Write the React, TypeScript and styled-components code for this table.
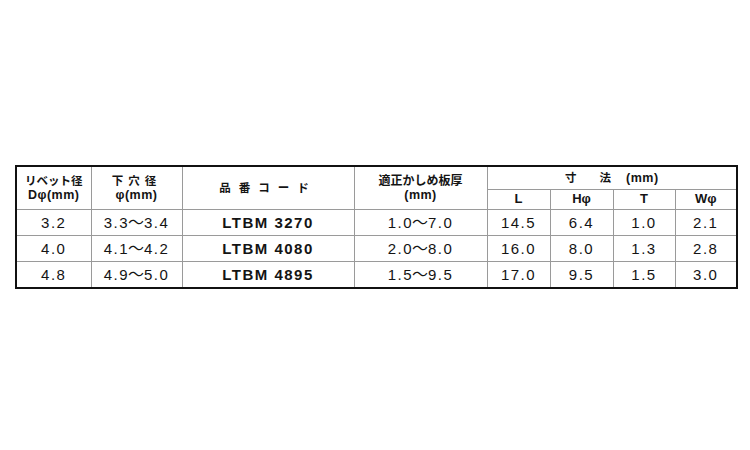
import React from 'react'
import styled, {createGlobalStyle} from 'styled-components'

const GlobalStyle = createGlobalStyle`
  html, body {
    margin: 0;
    padding: 0;
    background: #ffffff;
  }
  body {
    font-family: "Liberation Sans", "Noto Sans CJK JP", sans-serif;
    color: #141414;
  }
`

const Page = styled.div`
  width: 750px;
  height: 450px;
  box-sizing: border-box;
  padding: 165px 0 0 15px;
  background: #fff;
`

const SpecTable = styled.table`
  width: 721px;
  border-collapse: collapse;
  table-layout: fixed;
  border: 2px solid #111;
`

const HeadCell = styled.th`
  padding: 0;
  border: 1px solid #9a9a9a;
  font-family: "Liberation Sans", "Noto Sans CJK JP", sans-serif;
  font-weight: 700;
  font-size: 13px;
  line-height: 14px;
  text-align: center;
  vertical-align: middle;
  color: #141414;
`

// japanese label text sits a bit smaller than the latin units
const Jp = styled.span<{$spread?: number; $size?: number}>`
  font-family: "Noto Sans CJK JP", sans-serif;
  font-size: ${p => p.$size ?? 11.5}px;
  letter-spacing: ${p => p.$spread ?? 0}px;
`

const Unit = styled.span`
  font-size: 12.5px;
  letter-spacing: 0.5px;
`

const Cell = styled.td<{$bold?: boolean}>`
  padding: 0;
  height: 25px;
  border: 1px solid #9a9a9a;
  font-family: "Liberation Sans", "Noto Sans CJK JP", sans-serif;
  font-size: 15px;
  font-weight: ${p => (p.$bold ? 700 : 400)};
  letter-spacing: 1.5px;
  text-align: center;
  vertical-align: middle;
  color: #141414;
`

const Wave = styled.span`
  display: inline-flex;
  justify-content: center;
  width: 14px;
  margin-right: 1px;
  font-family: "Noto Sans CJK JP", sans-serif;
  font-size: 16px;
  line-height: 15px;
  letter-spacing: 0;
  white-space: nowrap;
`

const TopRow = styled.tr`
  height: 23px;
`

const SubRow = styled.tr`
  height: 20px;
`

type Rivet = {
  d: string
  hole: [string, string]
  code: string
  grip: [string, string]
  l: string
  h: string
  t: string
  w: string
}

const rivets: Rivet[] = [
  {d: '3.2', hole: ['3.3', '3.4'], code: 'LTBM 3270', grip: ['1.0', '7.0'], l: '14.5', h: '6.4', t: '1.0', w: '2.1'},
  {d: '4.0', hole: ['4.1', '4.2'], code: 'LTBM 4080', grip: ['2.0', '8.0'], l: '16.0', h: '8.0', t: '1.3', w: '2.8'},
  {d: '4.8', hole: ['4.9', '5.0'], code: 'LTBM 4895', grip: ['1.5', '9.5'], l: '17.0', h: '9.5', t: '1.5', w: '3.0'},
]

const widths = [75, 91, 172, 133, 63, 63, 62, 62]

const Range = ({pair}: {pair: [string, string]}) => (
  <>
    {pair[0]}
    <Wave>〜</Wave>
    {pair[1]}
  </>
)

export default function App() {
  return (
    <>
      <GlobalStyle />
      <Page>
        <SpecTable>
          <colgroup>
            {widths.map((w, i) => (
              <col key={i} style={{width: w}} />
            ))}
          </colgroup>
          <thead>
            <TopRow>
              <HeadCell rowSpan={2}>
                <Jp>リベット径</Jp>
                <br />
                <Unit>Dφ(mm)</Unit>
              </HeadCell>
              <HeadCell rowSpan={2}>
                <Jp $spread={5}>下穴径</Jp>
                <br />
                <Unit>φ(mm)</Unit>
              </HeadCell>
              <HeadCell rowSpan={2}>
                <Jp $spread={8}>品番コード</Jp>
              </HeadCell>
              <HeadCell rowSpan={2}>
                <Jp $size={12}>適正かしめ板厚</Jp>
                <br />
                <Unit>(mm)</Unit>
              </HeadCell>
              <HeadCell colSpan={4}>
                <Jp>寸　　法　</Jp> <Unit>(mm)</Unit>
              </HeadCell>
            </TopRow>
            <SubRow>
              <HeadCell>L</HeadCell>
              <HeadCell>Hφ</HeadCell>
              <HeadCell>T</HeadCell>
              <HeadCell>Wφ</HeadCell>
            </SubRow>
          </thead>
          <tbody>
            {rivets.map(r => (
              <tr key={r.code}>
                <Cell>{r.d}</Cell>
                <Cell>
                  <Range pair={r.hole} />
                </Cell>
                <Cell $bold>{r.code}</Cell>
                <Cell>
                  <Range pair={r.grip} />
                </Cell>
                <Cell>{r.l}</Cell>
                <Cell>{r.h}</Cell>
                <Cell>{r.t}</Cell>
                <Cell>{r.w}</Cell>
              </tr>
            ))}
          </tbody>
        </SpecTable>
      </Page>
    </>
  )
}
